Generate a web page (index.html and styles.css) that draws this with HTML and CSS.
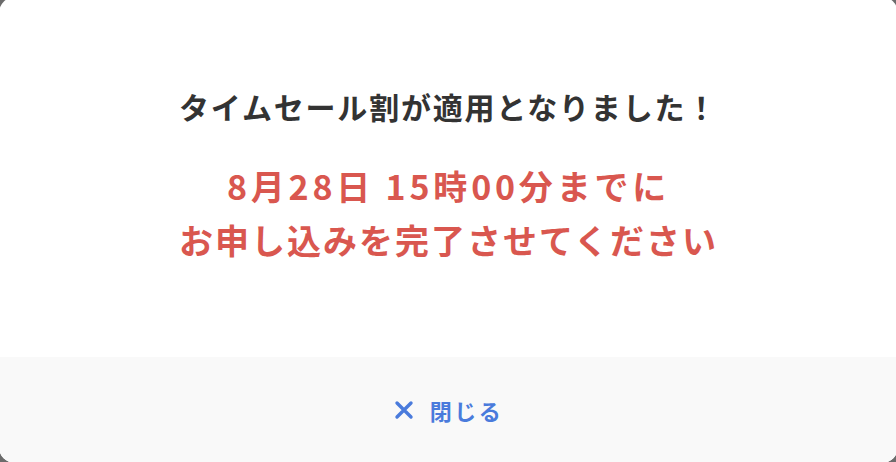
FILE: index.html
```html
<!DOCTYPE html>
<html lang="ja">
<head>
<meta charset="utf-8">
<link rel="stylesheet" href="styles.css">
</head>
<body>
<div class="dialog">
  <div class="content">
    <p class="title">タイムセール割が適用となりました！</p>
    <p class="notice"><span class="notice-date">8月28日 15時00分までに</span><span class="notice-line">お申し込みを完了させてください</span></p>
  </div>
  <div class="footer">
    <button class="close" type="button">
      <svg class="close-icon" width="20" height="20" viewBox="0 0 20 20" aria-hidden="true"><path d="M3 3 L17 17 M17 3 L3 17" stroke="#4a7bdc" stroke-width="3.4" stroke-linecap="round" fill="none"/></svg>
      <span>閉じる</span>
    </button>
  </div>
</div>
</body>
</html>
```

FILE: styles.css
```css
html, body {
  margin: 0;
  padding: 0;
  height: 100%;
  overflow: hidden;
  background: #6b6b6b;
}
body {
  font-family: "Noto Sans CJK JP", "Noto Sans", sans-serif;
}
.dialog {
  margin: -3px -2px 0 -1px;
  height: 466px;
  background: #fff;
  border-radius: 16px;
  overflow: hidden;
  display: flex;
  flex-direction: column;
}
.content {
  height: 360px;
  display: flex;
  flex-direction: column;
  align-items: center;
  padding-top: 86px;
  box-sizing: border-box;
}
.title {
  margin: 0;
  font-size: 30px;
  font-weight: bold;
  color: #333;
  letter-spacing: 1.8px;
  line-height: 46px;
}
.notice {
  margin: 30px 0 0;
  font-size: 34px;
  font-weight: bold;
  color: #d9574f;
  line-height: 54px;
  text-align: center;
  display: flex;
  flex-direction: column;
  align-items: center;
}
.notice-date {
  letter-spacing: 3.8px;
}
.notice-line {
  letter-spacing: 2px;
}
.footer {
  flex: 1;
  background: #f9f9f9;
  display: flex;
  align-items: center;
  justify-content: center;
}
.close {
  border: 0;
  background: none;
  padding: 0;
  display: flex;
  align-items: center;
  gap: 16px;
  font-family: inherit;
  font-size: 22px;
  font-weight: bold;
  color: #4a7bdc;
  letter-spacing: 2.5px;
}
```
